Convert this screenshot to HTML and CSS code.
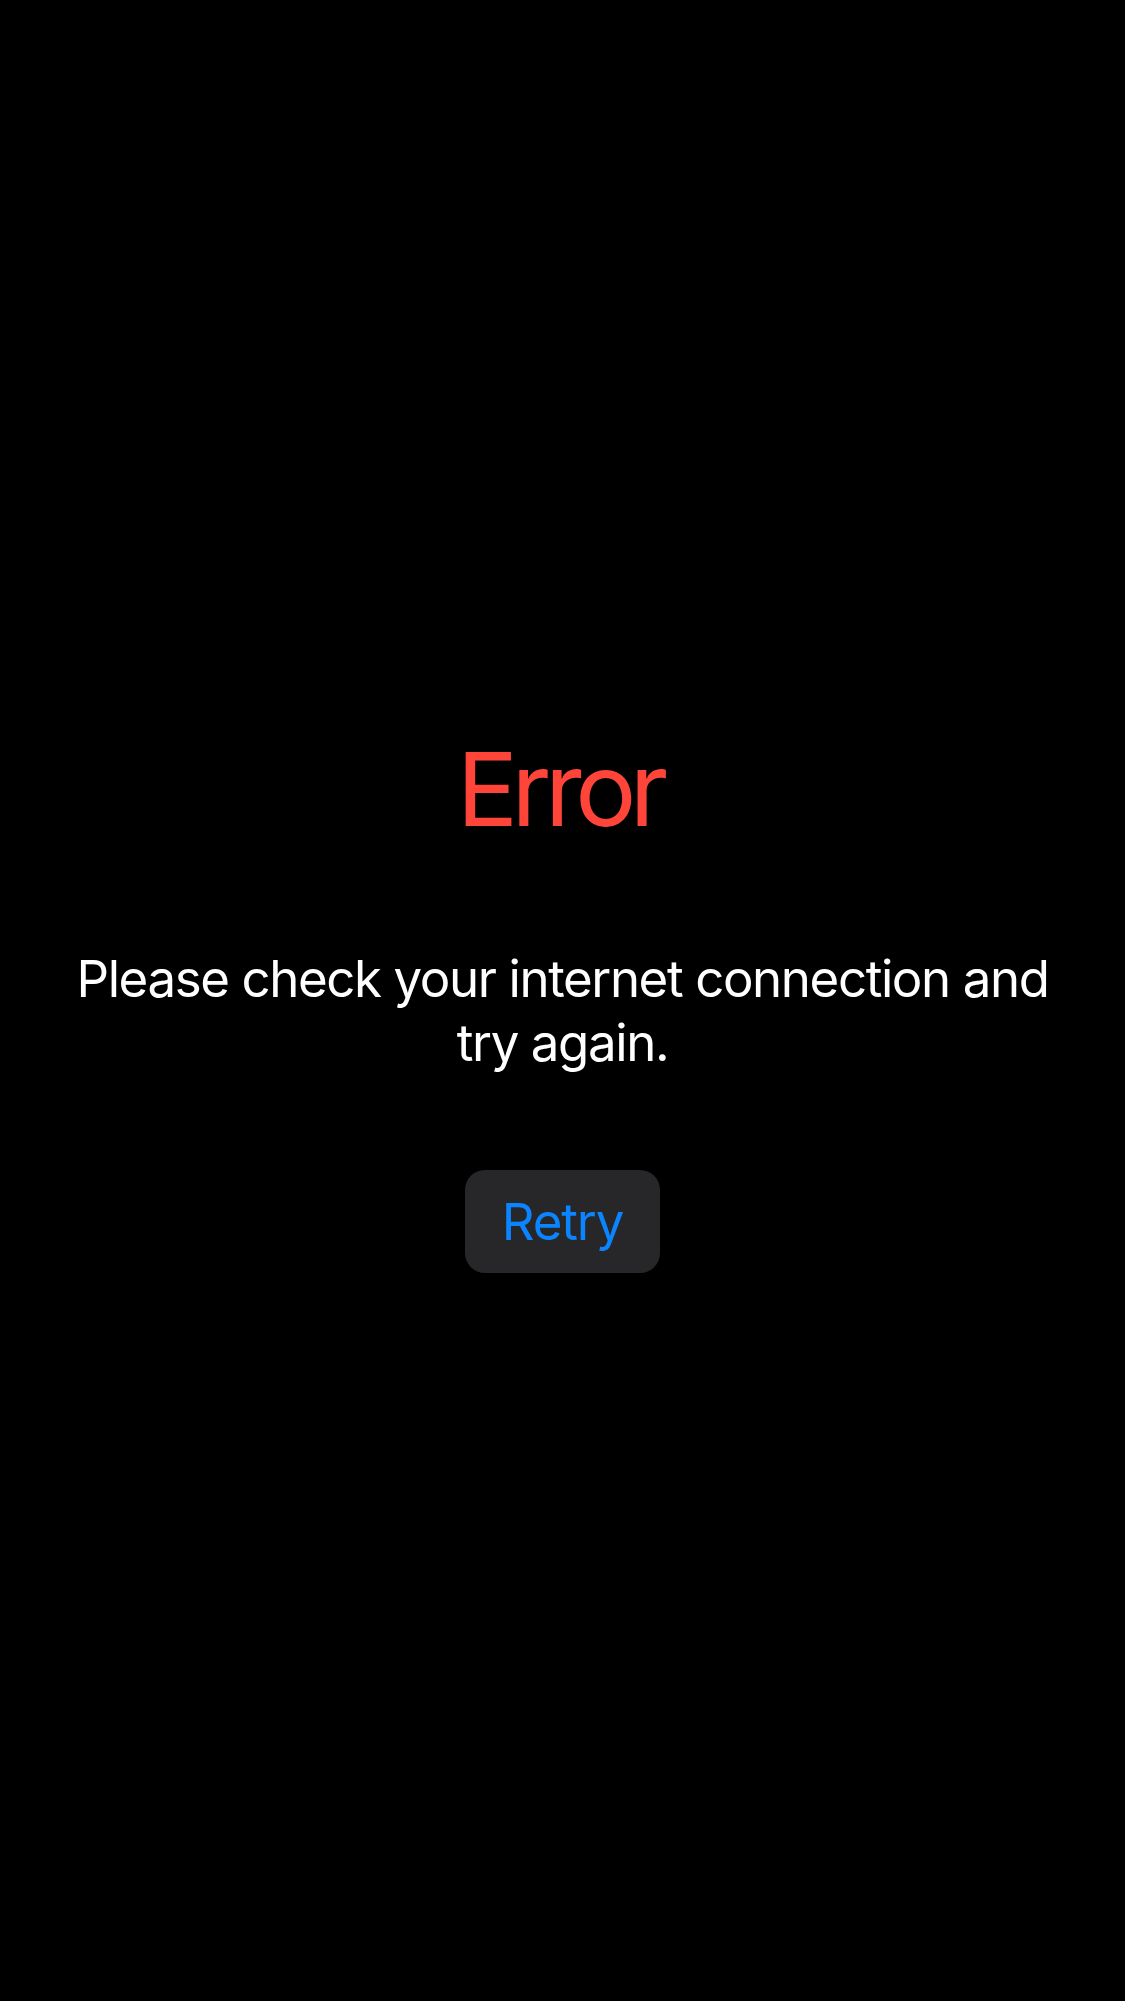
FILE: index.html
```html
<!DOCTYPE html>
<html lang="en">
<head>
<meta charset="utf-8">
<title>Error</title>
<link rel="stylesheet" href="styles.css">
</head>
<body>
<main class="screen">
  <h1 class="title">Error</h1>
  <p class="message">Please check your internet connection and try again.</p>
  <button class="retry" type="button">Retry</button>
</main>
</body>
</html>
```
FILE: styles.css
```css
html, body {
  margin: 0;
  padding: 0;
  background: #000000;
}
.screen {
  width: 1125px;
  height: 2001px;
  box-sizing: border-box;
  padding: 728px 48px 0;
  display: flex;
  flex-direction: column;
  align-items: center;
  font-family: Inter, "Noto Sans", sans-serif;
}
.title {
  margin: 0;
  font-size: 102px;
  line-height: 122px;
  font-weight: 400;
  color: #ff453a;
  letter-spacing: -6.5px;
  text-indent: -6.5px;
}
.message {
  margin: 97px 0 0;
  font-size: 51px;
  line-height: 64px;
  color: #ffffff;
  text-align: center;
  letter-spacing: -1.4px;
}
.retry {
  margin-top: 95px;
  border: 0;
  border-radius: 20px;
  background: #272729;
  color: #0a84ff;
  font-family: inherit;
  font-size: 51px;
  line-height: 64px;
  padding: 19.5px 36.5px;
  letter-spacing: -1.1px;
}
```
